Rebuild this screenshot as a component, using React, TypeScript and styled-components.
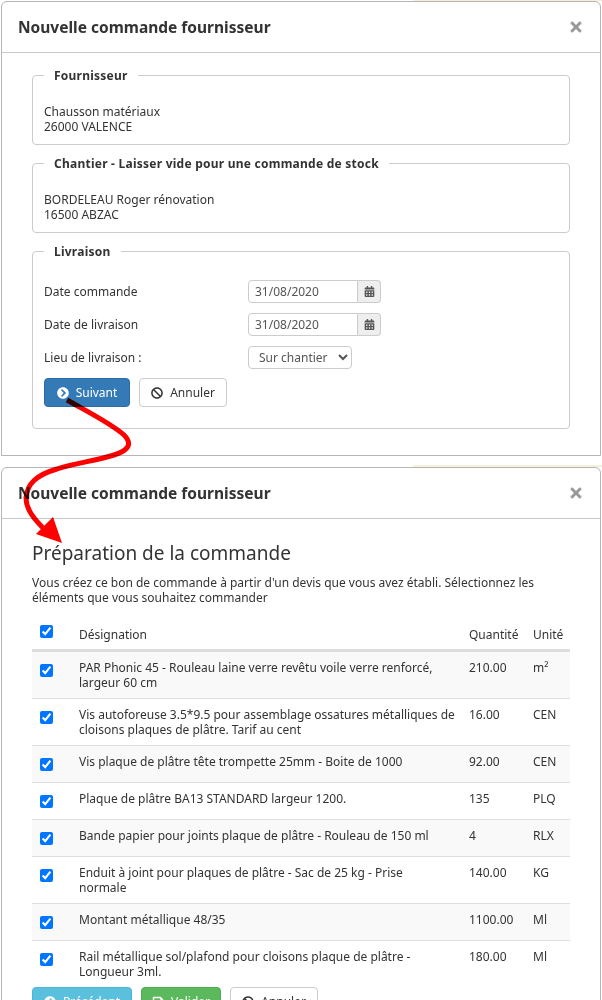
import styled, { createGlobalStyle } from "styled-components"
import { FaBan, FaCalendarAlt, FaChevronCircleLeft, FaChevronCircleRight, FaSave, FaTimes } from "react-icons/fa"

type LineType = {
    label: string
    qty: string
    unit: string
}

const lines: LineType[] = [
    { label: "PAR Phonic 45 - Rouleau laine verre revêtu voile verre renforcé,\nlargeur 60 cm", qty: "210.00", unit: "m²" },
    { label: "Vis autoforeuse 3.5*9.5 pour assemblage ossatures métalliques de\ncloisons plaques de plâtre. Tarif au cent", qty: "16.00", unit: "CEN" },
    { label: "Vis plaque de plâtre tête trompette 25mm - Boite de 1000", qty: "92.00", unit: "CEN" },
    { label: "Plaque de plâtre BA13 STANDARD largeur 1200.", qty: "135", unit: "PLQ" },
    { label: "Bande papier pour joints plaque de plâtre - Rouleau de 150 ml", qty: "4", unit: "RLX" },
    { label: "Enduit à joint pour plaques de plâtre - Sac de 25 kg - Prise\nnormale", qty: "140.00", unit: "KG" },
    { label: "Montant métallique 48/35", qty: "1100.00", unit: "Ml" },
    { label: "Rail métallique sol/plafond pour cloisons plaque de plâtre -\nLongueur 3ml.", qty: "180.00", unit: "Ml" },
]

const Header = () => (
    <ModalHeader>
        <ModalTitle>Nouvelle commande fournisseur</ModalTitle>
        <Close><FaTimes /></Close>
    </ModalHeader>
)

const DateInput = ({ value }: { value: string }) => (
    <DateGroup>
        <DateField type="text" defaultValue={value} />
        <DateAddon><FaCalendarAlt /></DateAddon>
    </DateGroup>
)

export default function App() {
    return (
        <Page>
            <GlobalStyle />
            <Strip $top={0} $height={1} />
            <Strip $top={465} $height={2} />
            <FirstModal>
                <Header />
                <FirstBody>
                    <Group>
                        <Legend>Fournisseur</Legend>
                        <Address>Chausson matériaux<br />26000 VALENCE</Address>
                    </Group>
                    <Group>
                        <Legend>Chantier - Laisser vide pour une commande de stock</Legend>
                        <Address>BORDELEAU Roger rénovation<br />16500 ABZAC</Address>
                    </Group>
                    <DeliveryGroup>
                        <Legend>Livraison</Legend>
                        <FormRow>
                            <FormLabel>Date commande</FormLabel>
                            <DateInput value="31/08/2020" />
                        </FormRow>
                        <FormRow>
                            <FormLabel>Date de livraison</FormLabel>
                            <DateInput value="31/08/2020" />
                        </FormRow>
                        <FormRow>
                            <FormLabel>Lieu de livraison :</FormLabel>
                            <Place defaultValue="chantier">
                                <option value="chantier">Sur chantier</option>
                            </Place>
                        </FormRow>
                        <Actions>
                            <Button $variant="primary" $width={86}><FaChevronCircleRight />Suivant</Button>
                            <Button $variant="plain" $width={88}><FaBan />Annuler</Button>
                        </Actions>
                    </DeliveryGroup>
                </FirstBody>
            </FirstModal>

            <SecondModal>
                <Header />
                <SecondBody>
                    <Heading>Préparation de la commande</Heading>
                    <Intro>
                        Vous créez ce bon de commande à partir d'un devis que vous avez établi. Sélectionnez les
                        éléments que vous souhaitez commander
                    </Intro>
                    <Table>
                        <colgroup>
                            <col width="39" />
                            <col width="390" />
                            <col width="64" />
                            <col width="45" />
                        </colgroup>
                        <thead>
                            <tr>
                                <HeadCheckCell><Check type="checkbox" defaultChecked /></HeadCheckCell>
                                <HeadCell>Désignation</HeadCell>
                                <HeadCell>Quantité</HeadCell>
                                <HeadCell>Unité</HeadCell>
                            </tr>
                        </thead>
                        <tbody>
                            {lines.map((line) => (
                                <Row key={line.label}>
                                    <Cell><Check type="checkbox" defaultChecked /></Cell>
                                    <LabelCell>{line.label}</LabelCell>
                                    <Cell>{line.qty}</Cell>
                                    <Cell>{line.unit}</Cell>
                                </Row>
                            ))}
                        </tbody>
                    </Table>
                    <Actions>
                        <Button $variant="info" $width={100}><FaChevronCircleLeft />Précédent</Button>
                        <Button $variant="success" $width={80}><FaSave />Valider</Button>
                        <Button $variant="plain" $width={88}><FaBan />Annuler</Button>
                    </Actions>
                </SecondBody>
            </SecondModal>

            <Arrow width="602" height="1000" viewBox="0 0 602 1000">
                <path
                    d="M67 400 C90 413 112 424 124 435 C132 443 130 450 114 455 C95 461 75 463 57 469 C36 475 27 484 26 498 C26 510 35 520 46 531"
                    fill="none"
                    stroke="#ff0000"
                    strokeWidth="5"
                />
                <polygon points="62,543 36,534 53,517" fill="#ff0000" />
            </Arrow>
        </Page>
    )
}

const GlobalStyle = createGlobalStyle`
  html, body {
    margin: 0;
    padding: 0;
    background: #fff;
  }
`

const Page = styled.div`
  position: relative;
  width: 602px;
  height: 1000px;
  overflow: hidden;
  padding-top: 1px;
  box-sizing: border-box;
  font-family: "Noto Sans", sans-serif;
  font-size: 12px;
  line-height: 15px;
  color: #333;
`

const Strip = styled.div<{ $top: number; $height: number }>`
  position: absolute;
  top: ${(p) => p.$top}px;
  left: 413px;
  right: 0;
  height: ${(p) => p.$height}px;
  background: #f6f0dc;
`

const Modal = styled.section`
  position: relative;
  width: 600px;
  margin-left: 1px;
  box-sizing: border-box;
  background: #fff;
  border: 1px solid #b5b5b5;
  border-radius: 6px;
`

const FirstModal = styled(Modal)`
  height: 455px;
  border-radius: 6px 6px 0 0;
`

const SecondModal = styled(Modal)`
  height: 560px;
  margin-top: 11px;
`

const ModalHeader = styled.header`
  display: flex;
  align-items: center;
  justify-content: space-between;
  height: 51px;
  box-sizing: border-box;
  padding: 0 16px 1px 16px;
  border-bottom: 1px solid #c8c8c8;
`

const ModalTitle = styled.h4`
  margin: 0;
  font-size: 15.5px;
  font-weight: 700;
  line-height: 20px;
  color: #333;
`

const Close = styled.span`
  display: flex;
  font-size: 16px;
  color: #999;
`

const FirstBody = styled.div`
  display: flex;
  flex-direction: column;
  gap: 11px;
  padding: 15px 30px 0 30px;
`

const Group = styled.fieldset`
  margin: 0;
  padding: 0 11px;
  height: 77px;
  box-sizing: border-box;
  border: 1px solid #ccc;
  border-radius: 4px;
`

const DeliveryGroup = styled(Group)`
  height: 185px;
`

const Legend = styled.legend`
  margin-left: 0;
  padding: 0 10px;
  font-weight: 700;
  line-height: 15px;
  letter-spacing: 0.24px;
`

const Address = styled.div`
  margin-top: 21px;
`

const FormRow = styled.div`
  display: flex;
  align-items: center;
  height: 25px;
  margin-bottom: 8px;
  &:first-of-type {
    margin-top: 20px;
  }
`

const FormLabel = styled.label`
  width: 204px;
`

const DateGroup = styled.div`
  display: flex;
  width: 133px;
  height: 23px;
`

const DateField = styled.input`
  width: 110px;
  box-sizing: border-box;
  padding: 0 6px;
  border: 1px solid #ccc;
  border-radius: 4px 0 0 4px;
  font: inherit;
  color: #555;
  outline: none;
`

const DateAddon = styled.span`
  display: flex;
  align-items: center;
  justify-content: center;
  flex: 1;
  background: #eee;
  border: 1px solid #ccc;
  border-left: 0;
  border-radius: 0 4px 4px 0;
  font-size: 11px;
  color: #555;
`

const Place = styled.select`
  width: 104px;
  height: 23px;
  padding: 0 6px;
  background: #fff;
  border: 1px solid #ccc;
  border-radius: 4px;
  font: inherit;
  color: #555;
`

const Actions = styled.div`
  display: flex;
  gap: 9px;
`

const variants = {
    primary: "background:#337ab7;border-color:#2e6da4;color:#fff;",
    info: "background:#5bc0de;border-color:#46b8da;color:#fff;",
    success: "background:#5cb85c;border-color:#4cae4c;color:#fff;",
    plain: "background:#fff;border-color:#ccc;color:#333;",
}

const Button = styled.button<{ $variant: keyof typeof variants; $width: number }>`
  display: inline-flex;
  align-items: center;
  justify-content: center;
  gap: 7px;
  width: ${(p) => p.$width}px;
  height: 29px;
  padding: 0;
  border: 1px solid;
  border-radius: 4px;
  font: inherit;
  ${(p) => variants[p.$variant]}
  svg {
    font-size: 12px;
  }
`

const SecondBody = styled.div`
  padding: 22px 29px 0 30px;
`

const Heading = styled.h3`
  margin: 0;
  font-size: 19px;
  font-weight: 400;
  line-height: 24px;
  color: #333;
`

const Intro = styled.p`
  margin: 10px 0 8px;
`

const Table = styled.table`
  width: 538px;
  table-layout: fixed;
  border-collapse: collapse;
`

const HeadCell = styled.th`
  padding: 8px 8px 7px;
  font-weight: 400;
  text-align: left;
  vertical-align: bottom;
  border-bottom: 3px solid #ddd;
`

const HeadCheckCell = styled(HeadCell)`
  padding-bottom: 8px;
`

const Row = styled.tr`
  &:nth-child(odd) {
    background: #f9f9f9;
  }
`

const Cell = styled.td`
  padding: 8px;
  vertical-align: top;
  border-bottom: 1px solid #ddd;
  tr:last-child > & {
    border-bottom: 0;
  }
`

const LabelCell = styled(Cell)`
  white-space: pre;
`

const Check = styled.input`
  display: block;
  width: 13px;
  height: 13px;
  margin: 4px 0 3px;
`

const Arrow = styled.svg`
  position: absolute;
  top: 0;
  left: 0;
  pointer-events: none;
  mix-blend-mode: multiply;
`
